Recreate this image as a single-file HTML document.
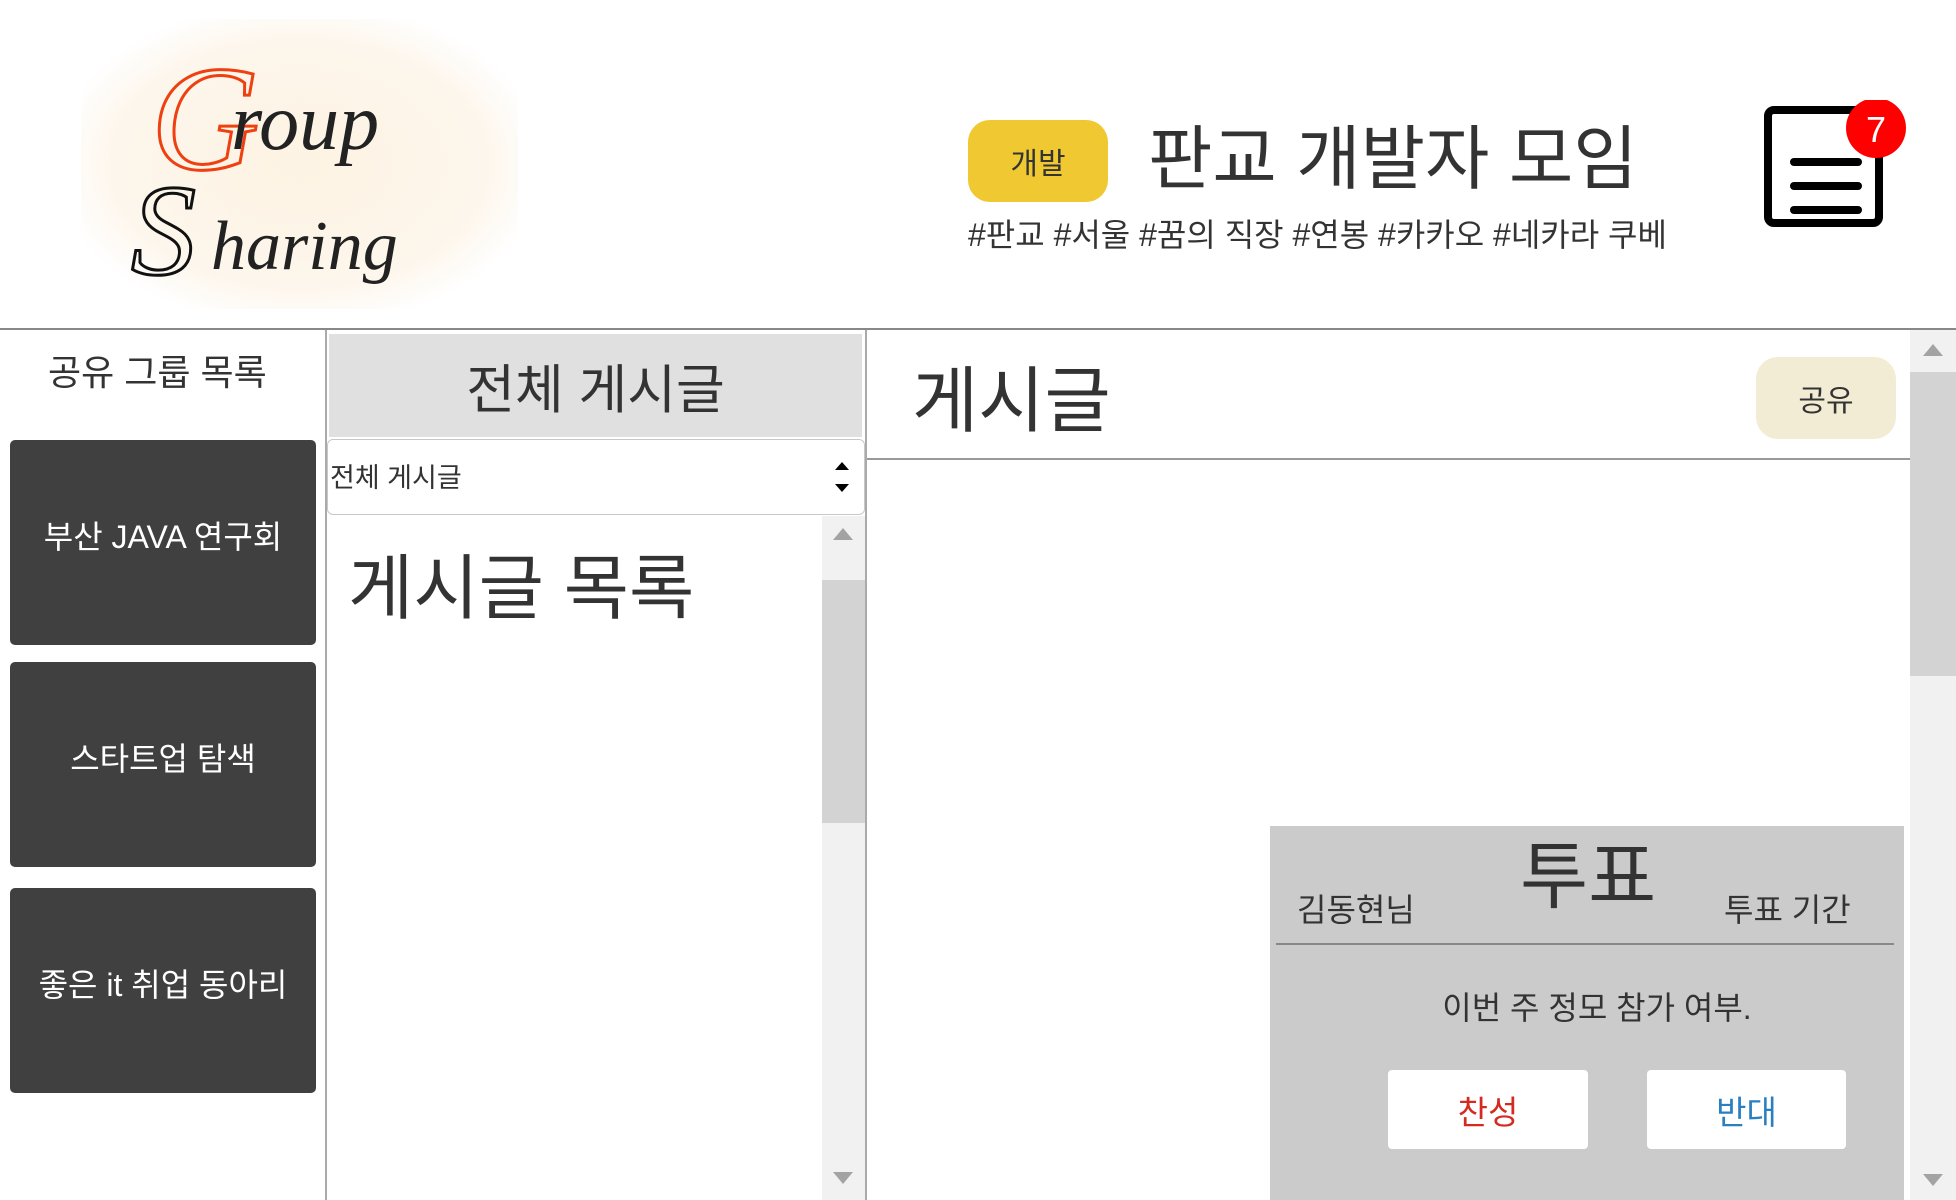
<!DOCTYPE html>
<html><head><meta charset="utf-8"><style>
*{margin:0;padding:0;box-sizing:border-box}
body{width:1956px;height:1200px;position:relative;overflow:hidden;background:#fff;font-family:"Liberation Sans","Noto Sans CJK KR",sans-serif;color:#333}
.a{position:absolute}
.card{position:absolute;left:10px;width:306px;height:205px;background:#404040;border-radius:5px;color:#fff;font-size:32px;display:flex;align-items:center;justify-content:center;padding-bottom:16px}
.c{white-space:nowrap}
</style></head><body>
<div class="a" style="left:81px;top:19px;width:437px;height:290px;background:radial-gradient(ellipse at center,#fdf3e3 0%,#fdf6ec 60%,#fff 80%)"></div>
<svg class="a" style="left:81px;top:19px" width="437" height="290">
<text x="70" y="150" font-family="Liberation Serif,serif" font-style="italic" font-size="150" fill="none" stroke="#ee4010" stroke-width="3">G</text>
<text x="150" y="130" font-family="Liberation Serif,serif" font-style="italic" font-size="80" fill="#222">roup</text>
<text x="50" y="255" font-family="Liberation Serif,serif" font-style="italic" font-size="130" fill="none" stroke="#111" stroke-width="3">S</text>
<text x="130" y="250" font-family="Liberation Serif,serif" font-style="italic" font-size="70" fill="#222">haring</text>
</svg>
<div class="a" style="left:968px;top:120px;width:140px;height:82px;background:#f0c832;border-radius:22px;font-size:30px;display:flex;align-items:center;justify-content:center;color:#333">개발</div>
<div class="a c" style="left:1148px;top:114px;font-size:70px;line-height:90px;color:#333">판교 개발자 모임</div>
<div class="a c" style="left:968px;top:214px;font-size:32px;line-height:42px;color:#333">#판교 #서울 #꿈의 직장 #연봉 #카카오 #네카라 쿠베</div>
<svg class="a" style="left:1760px;top:100px" width="150" height="130">
<rect x="8" y="10" width="111" height="113" rx="6" fill="none" stroke="#000" stroke-width="8"/>
<line x1="34" y1="62" x2="98" y2="62" stroke="#000" stroke-width="8" stroke-linecap="round"/>
<line x1="34" y1="86" x2="98" y2="86" stroke="#000" stroke-width="8" stroke-linecap="round"/>
<line x1="34" y1="110" x2="98" y2="110" stroke="#000" stroke-width="8" stroke-linecap="round"/>
<circle cx="116" cy="28" r="30" fill="#f00"/>
<text x="116" y="42" text-anchor="middle" font-family="Liberation Sans,sans-serif" font-size="36" fill="#fff">7</text>
</svg>
<div class="a" style="left:0;top:328px;width:1956px;height:2px;background:#888"></div>
<div class="a c" style="left:48px;top:350px;font-size:36px;line-height:46px">공유 그룹 목록</div>
<div class="a" style="left:325px;top:330px;width:2px;height:870px;background:#aaa"></div>
<div class="card" style="top:440px">부산 JAVA 연구회</div>
<div class="card" style="top:662px">스타트업 탐색</div>
<div class="card" style="top:888px">좋은 it 취업 동아리</div>
<div class="a" style="left:329px;top:334px;width:533px;height:103px;background:#e0e0e0;font-size:53px;display:flex;align-items:center;justify-content:center;color:#333">전체 게시글</div>
<div class="a" style="left:327px;top:439px;width:538px;height:76px;border:1.5px solid #c8c8c8;border-radius:6px;background:#fff;font-size:27px;line-height:76px;padding-left:2px">전체 게시글
<svg style="position:absolute;right:14px;top:20px" width="16" height="36"><polygon points="8,2 15,10 1,10" fill="#000"/><polygon points="1,24 15,24 8,32" fill="#000"/></svg></div>
<div class="a" style="left:822px;top:516px;width:43px;height:684px;background:#f1f1f1"></div>
<div class="a" style="left:822px;top:580px;width:43px;height:243px;background:#d3d3d3"></div>
<svg class="a" style="left:822px;top:520px" width="43" height="680"><polygon points="21,8 31,20 11,20" fill="#a3a3a3"/><polygon points="11,652 31,652 21,664" fill="#a3a3a3"/></svg>
<div class="a c" style="left:348px;top:542px;font-size:71px;line-height:96px;color:#333">게시글 목록</div>
<div class="a" style="left:865px;top:330px;width:2px;height:870px;background:#aaa"></div>
<div class="a c" style="left:912px;top:352px;font-size:72px;line-height:100px;color:#333">게시글</div>
<div class="a" style="left:1756px;top:357px;width:140px;height:82px;background:#f3ecd4;border-radius:22px;font-size:30px;display:flex;align-items:center;justify-content:center">공유</div>
<div class="a" style="left:867px;top:458px;width:1043px;height:2px;background:#999"></div>
<div class="a" style="left:1910px;top:330px;width:46px;height:870px;background:#f1f1f1"></div>
<div class="a" style="left:1910px;top:372px;width:46px;height:304px;background:#d3d3d3"></div>
<svg class="a" style="left:1910px;top:330px" width="46" height="870"><polygon points="23,14 33,26 13,26" fill="#a3a3a3"/><polygon points="13,844 33,844 23,856" fill="#a3a3a3"/></svg>
<div class="a" style="left:1270px;top:826px;width:634px;height:374px;background:#cbcbcb"></div>
<div class="a c" style="left:1520px;top:830px;font-size:74px;line-height:94px;color:#333">투표</div>
<div class="a c" style="left:1297px;top:890px;font-size:32px;line-height:40px">김동현님</div>
<div class="a c" style="left:1724px;top:890px;font-size:32px;line-height:40px">투표 기간</div>
<div class="a" style="left:1276px;top:943px;width:618px;height:2px;background:#888"></div>
<div class="a c" style="left:1280px;top:987px;width:634px;text-align:center;font-size:32px;line-height:42px">이번 주 정모 참가 여부.</div>
<div class="a" style="left:1388px;top:1070px;width:200px;height:79px;background:#fff;border-radius:4px;font-size:33px;color:#d42a20;display:flex;align-items:center;justify-content:center">찬성</div>
<div class="a" style="left:1647px;top:1070px;width:199px;height:79px;background:#fff;border-radius:4px;font-size:33px;color:#2a7fc0;display:flex;align-items:center;justify-content:center">반대</div>
</body></html>
